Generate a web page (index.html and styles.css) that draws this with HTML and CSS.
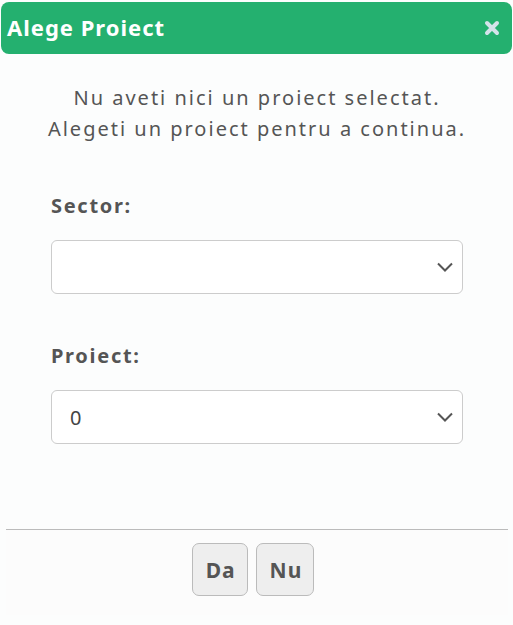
FILE: index.html
```html
<!DOCTYPE html>
<html>
<head>
<meta charset="utf-8">
<link rel="stylesheet" href="styles.css">
</head>
<body>
<div class="dialog">
  <div class="titlebar">
    <span class="title">Alege Proiect</span>
    <span class="close" aria-label="close">
      <svg width="16" height="16" viewBox="0 0 16 16"><path d="M3 3 L13 13 M13 3 L3 13" stroke="#d4e3ea" stroke-width="4" stroke-linecap="round"/></svg>
    </span>
  </div>
  <div class="content">
    <p class="msg">Nu aveti nici un proiect selectat.<br>Alegeti un proiect pentru a continua.</p>
    <div class="field">
      <label class="label">Sector:</label>
      <div class="select"><span class="value"></span>
        <svg class="chev" width="16" height="10" viewBox="0 0 16 10"><path d="M1 1.5 L8 8.5 L15 1.5" fill="none" stroke="#555" stroke-width="2"/></svg>
      </div>
    </div>
    <div class="field">
      <label class="label">Proiect:</label>
      <div class="select"><span class="value">0</span>
        <svg class="chev" width="16" height="10" viewBox="0 0 16 10"><path d="M1 1.5 L8 8.5 L15 1.5" fill="none" stroke="#555" stroke-width="2"/></svg>
      </div>
    </div>
  </div>
  <div class="buttonpane">
    <button class="btn">Da</button>
    <button class="btn">Nu</button>
  </div>
</div>
</body>
</html>
```
FILE: styles.css
```css
html, body {
  margin: 0;
  padding: 0;
  background: #fcfdfd;
}
body {
  font-family: "Noto Sans", sans-serif;
  color: #555;
}
.dialog {
  width: 513px;
  height: 625px;
  display: flex;
  flex-direction: column;
  padding-top: 2px;
  box-sizing: border-box;
}
.titlebar {
  margin: 0 1px;
  height: 52px;
  flex: none;
  background: #24b06f;
  border-radius: 8px;
  display: flex;
  align-items: center;
  justify-content: space-between;
  padding: 0 12px 3px 6px;
  box-sizing: border-box;
}
.title {
  color: #fff;
  font-weight: bold;
  font-size: 22px;
  letter-spacing: 1px;
}
.close {
  display: flex;
  margin-top: 3px;
}
.content {
  flex: 1;
  padding: 0 50px 0 51px;
}
.msg {
  text-align: center;
  white-space: nowrap;
  margin: 28px -40px 0;
  font-size: 20px;
  line-height: 31px;
  letter-spacing: 2px;
}
.field {
  margin-top: 50px;
}
.label {
  display: block;
  font-weight: bold;
  font-size: 20px;
  line-height: 24px;
  letter-spacing: 1.7px;
  margin-bottom: 22px;
}
.select {
  height: 54px;
  box-sizing: border-box;
  border: 1px solid #cccccc;
  border-radius: 6px;
  background: #fff;
  display: flex;
  align-items: center;
  justify-content: space-between;
  padding: 0 9px 0 18px;
  font-size: 20px;
  color: #444;
}
.buttonpane {
  flex: none;
  margin: 0 5px 10px 6px;
  border-top: 1px solid #bbbbbb;
  background: #fcfcfc;
  display: flex;
  justify-content: center;
  gap: 8px;
  padding: 13px 8px 19px 0;
}
.btn {
  font-family: "Noto Sans", sans-serif;
  font-weight: bold;
  font-size: 21px;
  letter-spacing: 1px;
  color: #555;
  background: #eeeeee;
  border: 1px solid #bbbbbb;
  border-radius: 7px;
  height: 53px;
  padding: 0 11px 0 13px;
}
```
